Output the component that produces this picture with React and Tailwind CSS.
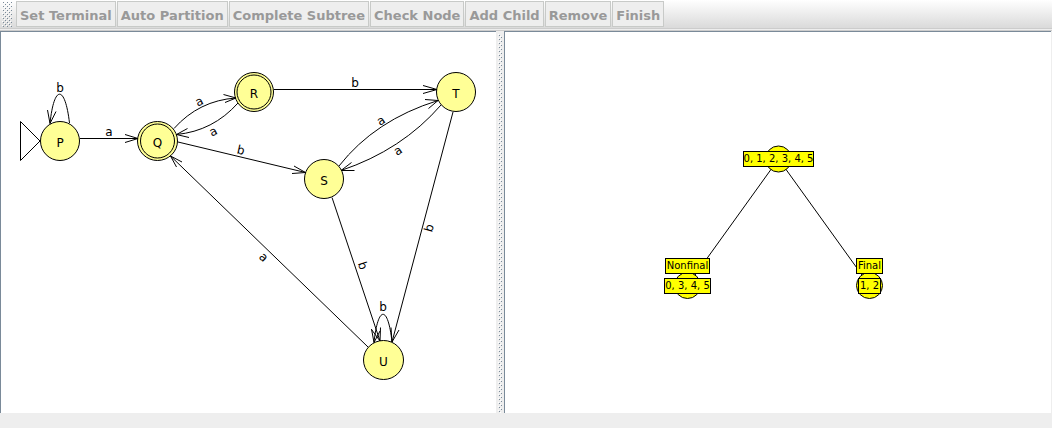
const actions = [
  "Set Terminal",
  "Auto Partition",
  "Complete Subtree",
  "Check Node",
  "Add Child",
  "Remove",
  "Finish",
];

const states = [
  { name: "P", x: 60, y: 141, rx: 19.5 },
  { name: "Q", x: 157.5, y: 141, rx: 20, final: true },
  { name: "R", x: 254, y: 92, rx: 19.5, final: true },
  { name: "S", x: 324, y: 179, rx: 19.5 },
  { name: "T", x: 456, y: 92, rx: 19.5 },
  { name: "U", x: 383.5, y: 360, rx: 20 },
];

const transitions = [
  { id: "PP", d: "M69.5 123 C65 84.5 54 84.5 50 123.5", head: "M47.5 110 L50 123.5 L56 111.5", label: "b", x: 60, y: 92, angle: 0 },
  { id: "PQ", d: "M80 138.5 H138", head: "M125 134.5 L138 138.5 L125 142.5", label: "a", x: 109, y: 136, angle: 0 },
  { id: "QR", d: "M174 128.5 Q199 100.5 236 98", head: "M223.5 94.5 L236 98 L225 102.5", label: "a", x: 201, y: 105, angle: -27 },
  { id: "RQ", d: "M238 103 Q213 131 176.5 134.5", head: "M187.5 128.5 L176.5 134.5 L189 137.5", label: "a", x: 215, y: 135, angle: -27 },
  { id: "QS", d: "M178 142 L305.5 172.5", head: "M294 166 L305.5 172.5 L292 173.5", label: "b", x: 240, y: 154, angle: 13 },
  { id: "RT", d: "M274 89.5 H437", head: "M423 85.5 L437 89.5 L423 93.5", label: "b", x: 355, y: 87, angle: 0 },
  { id: "ST", d: "M339 166 Q375 120 438 100.5", head: "M425 99.5 L438 100.5 L428.5 108.5", label: "a", x: 383, y: 124, angle: -33 },
  { id: "TS", d: "M441 105 Q402 150 341 170.5", head: "M351.5 162.5 L341 170.5 L354.5 170.5", label: "a", x: 400, y: 154, angle: -33 },
  { id: "TU", d: "M453 112 L392 342", head: "M391 327.5 L392 342 L399 330", label: "b", x: 433, y: 229, angle: -75 },
  { id: "SU", d: "M332 197.5 L380 341", head: "M371.5 329.5 L380 341 L380.5 327.5", label: "b", x: 359, y: 267, angle: 72 },
  { id: "UQ", d: "M368 347 L170.5 156", head: "M182 162 L170.5 156 L176.5 167", label: "a", x: 261, y: 260, angle: 44 },
  { id: "UU", d: "M392 342 C388 305 378 305 374 342.5", head: "M371.5 329 L374 342.5 L380 331", label: "b", x: 383, y: 311, angle: 0 },
];

const treeCircles = [
  { x: 778.5, y: 159 },
  { x: 687.5, y: 285.5 },
  { x: 869.5, y: 285.5 },
];

const treeLabels = [
  { text: "0, 1, 2, 3, 4, 5", x: 743.5, y: 151.5, w: 70 },
  { text: "Nonfinal", x: 665.5, y: 258.5, w: 44 },
  { text: "0, 3, 4, 5", x: 664.5, y: 278.5, w: 46 },
  { text: "Final", x: 856.5, y: 258.5, w: 26 },
  { text: "1, 2", x: 858.5, y: 278.5, w: 22 },
];

function GripDots({ id, className }) {
  return (
    <svg className={className} aria-hidden="true">
      <defs>
        <pattern id={id} width="4" height="4" patternUnits="userSpaceOnUse">
          <rect x="0" y="0" width="1" height="1" fill="#ffffff" />
          <rect x="1" y="1" width="1" height="1" fill="#7a8a99" />
          <rect x="2" y="2" width="1" height="1" fill="#ffffff" />
          <rect x="3" y="3" width="1" height="1" fill="#7a8a99" />
        </pattern>
      </defs>
      <rect width="100%" height="100%" fill={`url(#${id})`} />
    </svg>
  );
}

function Toolbar() {
  return (
    <header className="flex items-start gap-1 border-b border-[#cccccc] bg-linear-to-b from-white to-[#dadada] pt-px pb-px pl-[2px]">
      <GripDots id="toolbar-grip" className="h-[26px] w-[10px] shrink-0" />
      <div role="toolbar" aria-label="Minimization" className="flex gap-px">
        {actions.map((label) => (
          <button
            key={label}
            type="button"
            disabled
            className="h-[26px] border border-[#c8cac8] bg-[#eeeeee] px-[3px] pt-[2px] text-[13px] leading-6 font-bold whitespace-nowrap text-[#999999]"
          >
            {label}
          </button>
        ))}
      </div>
    </header>
  );
}

function AutomatonView() {
  return (
    <svg width="495" height="381" viewBox="1 32 495 381" role="img" aria-label="Automaton" className="block text-[12px]">
      <path d="M20.5 121.5 V160.5 L40 141 Z" fill="#ffffff" stroke="#000000" />
      {states.map((s) => (
        <g key={s.name} stroke="#000000" fill="#ffff96">
          <ellipse cx={s.x} cy={s.y} rx={s.rx} ry="19.5" />
          {s.final && <circle cx={s.x} cy={s.y} r="17" />}
          <text x={s.x} y={s.y + 5.5} textAnchor="middle" fill="#000000" stroke="none">
            {s.name}
          </text>
        </g>
      ))}
      {transitions.map((t) => (
        <g key={t.id} fill="none" stroke="#000000">
          <path d={t.d} />
          <path d={t.head} />
          <text
            x={t.x}
            y={t.y}
            transform={`rotate(${t.angle} ${t.x} ${t.y})`}
            textAnchor="middle"
            fill="#000000"
            stroke="none"
          >
            {t.label}
          </text>
        </g>
      ))}
    </svg>
  );
}

function TreeView() {
  return (
    <svg width="546" height="381" viewBox="505 32 546 381" role="img" aria-label="Partition tree" className="block text-[10px]">
      <g stroke="#000000">
        <path d="M778.5 159 L687.5 285.5 M778.5 159 L869.5 285.5" />
        {treeCircles.map((c) => (
          <circle key={c.x} cx={c.x} cy={c.y} r="13" fill="#ffff00" />
        ))}
        {treeLabels.map((l) => (
          <g key={l.text}>
            <rect x={l.x} y={l.y} width={l.w} height="15" fill="#ffff00" />
            <text x={l.x + l.w / 2} y={l.y + 10} textAnchor="middle" stroke="none">
              {l.text}
            </text>
          </g>
        ))}
      </g>
    </svg>
  );
}

export default function App() {
  return (
    <div className="flex min-h-screen flex-col bg-[#eeeeee] font-['DejaVu_Sans',sans-serif] text-black">
      <Toolbar />
      <main className="mt-px grid flex-1 grid-cols-[minmax(0,496fr)_8px_minmax(0,547fr)] border-t border-[#cccccc] pr-px">
        <section className="overflow-hidden border-t border-l border-[#7a8a99] bg-white">
          <AutomatonView />
        </section>
        <div role="separator" aria-orientation="vertical" className="flex justify-center pt-[3px]">
          <GripDots id="split-grip" className="h-full w-1" />
        </div>
        <section className="overflow-hidden border-t border-l border-[#7a8a99] bg-white">
          <TreeView />
        </section>
      </main>
      <footer className="h-[15px]" />
    </div>
  );
}
